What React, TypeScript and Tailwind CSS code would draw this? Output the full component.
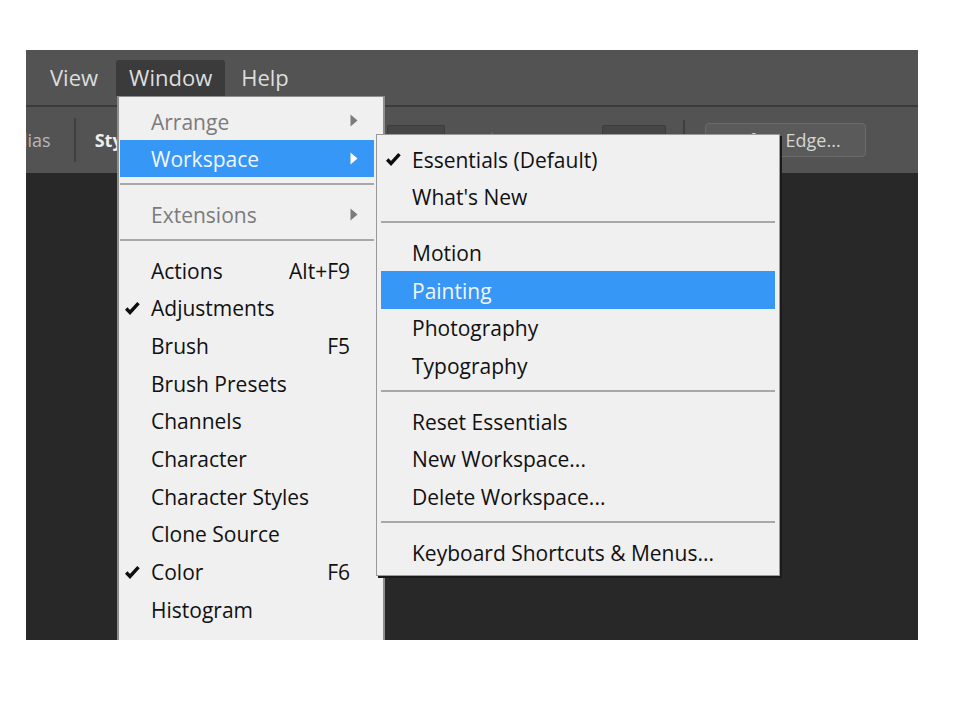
import React from "react";

type Item =
  | { kind: "sep" }
  | {
      kind: "item";
      label: string;
      checked?: boolean;
      shortcut?: string;
      sub?: boolean;
      disabled?: boolean;
      active?: boolean;
    };

const windowItems: Item[] = [
  { kind: "item", label: "Arrange", sub: true, disabled: true },
  { kind: "item", label: "Workspace", sub: true, active: true },
  { kind: "sep" },
  { kind: "item", label: "Extensions", sub: true, disabled: true },
  { kind: "sep" },
  { kind: "item", label: "Actions", shortcut: "Alt+F9" },
  { kind: "item", label: "Adjustments", checked: true },
  { kind: "item", label: "Brush", shortcut: "F5" },
  { kind: "item", label: "Brush Presets" },
  { kind: "item", label: "Channels" },
  { kind: "item", label: "Character" },
  { kind: "item", label: "Character Styles" },
  { kind: "item", label: "Clone Source" },
  { kind: "item", label: "Color", checked: true, shortcut: "F6" },
  { kind: "item", label: "Histogram" },
  { kind: "item", label: "History", checked: true },
];

const workspaceItems: Item[] = [
  { kind: "item", label: "Essentials (Default)", checked: true },
  { kind: "item", label: "What's New" },
  { kind: "sep" },
  { kind: "item", label: "Motion" },
  { kind: "item", label: "Painting", active: true },
  { kind: "item", label: "Photography" },
  { kind: "item", label: "Typography" },
  { kind: "sep" },
  { kind: "item", label: "Reset Essentials" },
  { kind: "item", label: "New Workspace..." },
  { kind: "item", label: "Delete Workspace..." },
  { kind: "sep" },
  { kind: "item", label: "Keyboard Shortcuts & Menus..." },
];

const Check = () => (
  <svg width="15" height="13" viewBox="0 0 15 13" fill="none">
    <path d="M1.2 6.5 L5 10.5 L13.5 1.2" stroke="#0d0d0d" strokeWidth="3.4" />
  </svg>
);

const Arrow = ({ color }: { color: string }) => (
  <svg width="8" height="13" viewBox="0 0 8 13">
    <path d="M0.5 0.5 L7.5 6.5 L0.5 12.5 Z" fill={color} />
  </svg>
);

const MenuList = ({
  items,
  textLeft,
  hlInset,
  checkLeft,
}: {
  items: Item[];
  textLeft: string;
  hlInset: string;
  checkLeft: string;
}) => (
  <div className="flex flex-col">
    {items.map((it, i) =>
      it.kind === "sep" ? (
        <div key={i} className={`h-[18px] pt-[6px] ${hlInset}`}>
          <div className="h-[2px] bg-[#a8a8a8]" />
        </div>
      ) : (
        <div key={i} className={hlInset}>
          <div
            className={`relative flex h-[37.7px] items-center pt-[3px] ${textLeft} pr-[16px] ${
              it.active ? "bg-[#3797f7] text-[#f2f6ff]" : it.disabled ? "text-[#7b7b7b]" : "text-[#111111]"
            }`}
          >
            {it.checked && (
              <span className={`absolute top-[13px] ${checkLeft}`}>
                <Check />
              </span>
            )}
            <span className="flex-1">{it.label}</span>
            {it.shortcut && <span className="mr-[8px]">{it.shortcut}</span>}
            {it.sub && (
              <span className="-mt-[3px] flex">
                <Arrow color={it.active ? "#ffffff" : "#7b7b7b"} />
              </span>
            )}
          </div>
        </div>
      )
    )}
  </div>
);

export default function App() {
  return (
    <div
      className="w-[960px] h-[720px] bg-white pt-[50px] pl-[26px]"
      style={{ fontFamily: '"Open Sans", "Noto Sans", sans-serif' }}
    >
      <div className="relative w-[892px] h-[590px] overflow-hidden bg-[#282828] flex flex-col">
        {/* menu bar */}
        <div className="h-[57px] bg-[#535353] border-b-2 border-[#3b3b3b] flex items-center text-[22px] text-[#dedede]">
          <span className="ml-[24px]">View</span>
          <span className="ml-[18px] h-[36px] px-[13px] flex items-center bg-[#3b3b3b] rounded-t-[3px]">Window</span>
          <span className="ml-[16px]">Help</span>
        </div>

        {/* options bar */}
        <div className="h-[66px] bg-[#535353] flex items-center text-[18px] text-[#b8b8b8]">
          <span className="-ml-[3px]">lias</span>
          <div className="ml-[23px] w-[2px] h-[44px] bg-[#3f3f3f]" />
          <span className="ml-[19px] font-bold text-[#efefef]">Style:</span>
          <div className="ml-[243px] w-[58px] h-[30px] bg-[#464646] border border-[#3c3c3c] rounded-[2px]" />
          <svg className="ml-[35px]" width="22" height="20" viewBox="0 0 22 20">
            <path d="M0 8 H11 V2 L21 10 L11 18 V12 H0 Z" fill="#6d6d6d" />
          </svg>
          <span className="ml-[28px] w-[54px] text-[15px] text-[#8a8a8a]">Height:</span>
          <div className="ml-[18px] w-[64px] h-[30px] bg-[#464646] border border-[#3c3c3c] rounded-[2px]" />
          <div className="ml-[17px] w-[2px] h-[40px] bg-[#3f3f3f]" />
          <div className="ml-[20px] w-[161px] h-[34px] bg-[#5a5a5a] border border-[#6b6b6b] rounded-[4px] flex items-center pl-[22px] text-[18px] text-[#d6d6d6]">
            Refine Edge...
          </div>
        </div>

        <div className="flex-1 bg-[#282828]" />

        {/* Window dropdown */}
        <div className="absolute left-[91px] top-[46px] w-[268px] h-[600px] bg-[#f0f0f0] border-l-2 border-r-2 border-t border-[#8e8e8e] pt-[5px] text-[21px]">
          <MenuList items={windowItems} textLeft="pl-[31px]" hlInset="pl-[1px] pr-[9px]" checkLeft="left-[5px]" />
        </div>

        {/* Workspace submenu */}
        <div className="absolute left-[350px] top-[84px] w-[404px] h-[442px] bg-[#f0f0f0] border border-[#9a9a9a] shadow-[2px_2px_0_#1a1a1a] pt-[5px] text-[21px]">
          <MenuList items={workspaceItems} textLeft="pl-[31px]" hlInset="px-[4px]" checkLeft="left-[5px]" />
        </div>
      </div>
    </div>
  );
}
